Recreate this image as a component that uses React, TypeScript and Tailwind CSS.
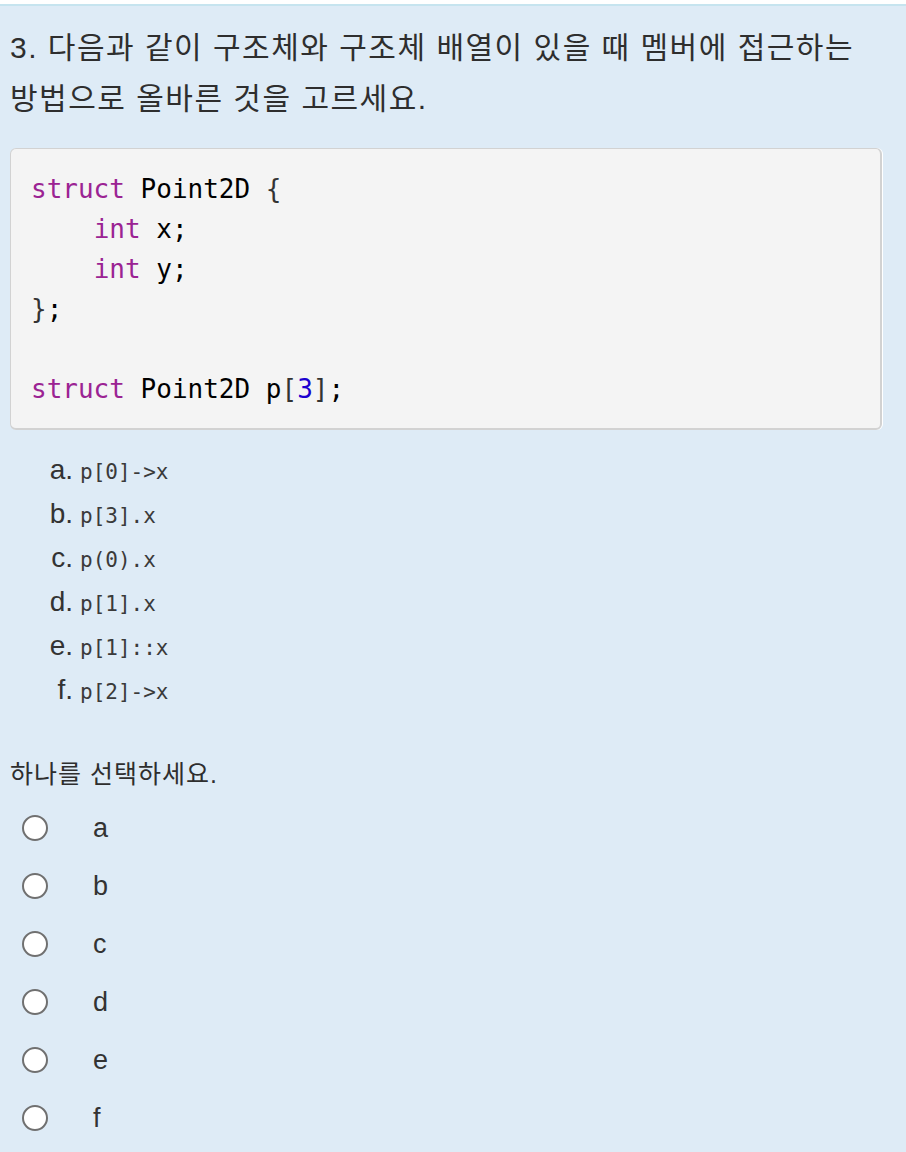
const options = [
  { label: 'a.', code: 'p[0]->x' },
  { label: 'b.', code: 'p[3].x' },
  { label: 'c.', code: 'p(0).x' },
  { label: 'd.', code: 'p[1].x' },
  { label: 'e.', code: 'p[1]::x' },
  { label: 'f.', code: 'p[2]->x' },
];

const choices = ['a', 'b', 'c', 'd', 'e', 'f'];

const sans = 'font-["Liberation_Sans","Noto_Sans_CJK_KR",sans-serif]';

export default function App() {
  return (
    <div className="min-h-[1152px] w-[906px] bg-white pt-[4px]">
      <div className="min-h-[1148px] border-t-2 border-[#c6e4ef] bg-[#deebf6] text-[#333]">
        {/* Question */}
        <div className={`${sans} break-keep px-[10px] pt-[16px] text-[30px] leading-[51px] tracking-[1.5px] text-[#2e2e2e]`}>
          3. 다음과 같이 구조체와 구조체 배열이 있을 때 멤버에 접근하는 방법으로 올바른 것을 고르세요.
        </div>

        {/* Code block */}
        <div className="ml-[10px] mr-[24px] mt-[24px] rounded-[6px] border-2 border-[#d2d2d2] border-l border-t bg-[#f4f4f4] px-[20px] pb-[19px] pt-[20px] shadow-[1px_0_0_#ffffff]">
          <pre className='font-["DejaVu_Sans_Mono",monospace] text-[26px] leading-[40px] text-black'>
            <span className="text-[#9b2393]">struct</span> Point2D <span className="text-[#333]">{'{'}</span>
            {'\n'}
            {'    '}
            <span className="text-[#9b2393]">int</span> x;
            {'\n'}
            {'    '}
            <span className="text-[#9b2393]">int</span> y;
            {'\n'}
            <span className="text-[#333]">{'}'}</span>;
            {'\n'}
            {'\n'}
            <span className="text-[#9b2393]">struct</span> Point2D p<span className="text-[#333]">[</span>
            <span className="text-[#1c00cf]">3</span>
            <span className="text-[#333]">]</span>;
          </pre>
        </div>

        {/* Answer list */}
        <div className="mt-[19px] flex flex-col">
          {options.map((o) => (
            <div key={o.label} className="flex h-[44px] items-center">
              <div className="flex items-baseline">
                <span className={`${sans} w-[73px] text-right text-[28px] leading-[32px] text-[#333]`}>{o.label}</span>
                <span className='ml-[7px] font-["DejaVu_Sans_Mono",monospace] text-[21px] text-[#3a3a3a]'>
                  {o.code}
                </span>
              </div>
            </div>
          ))}
        </div>

        {/* Prompt */}
        <div className={`${sans} mt-[43px] px-[10px] text-[25px] leading-[36px] tracking-[1px] text-[#2e2e2e]`}>
          하나를 선택하세요.
        </div>

        {/* Radios */}
        <div className="mt-[7px] flex flex-col">
          {choices.map((c) => (
            <label key={c} className="flex h-[58px] items-center pl-[22px]">
              <span className="h-[26px] w-[26px] rounded-full border-2 border-[#707070] bg-white" />
              <span className={`${sans} ml-[45px] text-[27px] text-[#333]`}>{c}</span>
            </label>
          ))}
        </div>
      </div>
    </div>
  );
}
